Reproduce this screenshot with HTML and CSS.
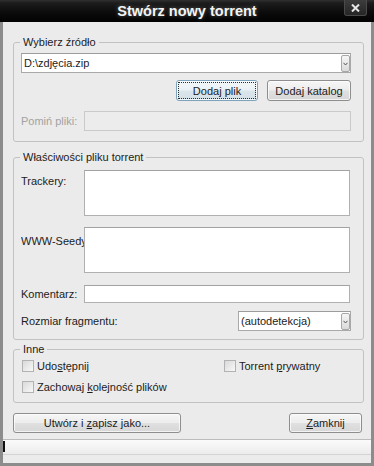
FILE: index.html
```html
<!DOCTYPE html>
<html lang="pl">
<head>
<meta charset="utf-8">
<title>Stwórz nowy torrent</title>
<link rel="stylesheet" href="styles.css">
</head>
<body>
<div class="window">
  <div class="titlebar">
    <div class="title">Stwórz nowy torrent</div>
    <div class="close-btn">
      <svg width="9" height="8" viewBox="0 0 9 8"><path d="M1 0.5 L8 7.5 M8 0.5 L1 7.5" stroke="#e6e6e6" stroke-width="2" fill="none"/></svg>
    </div>
  </div>
  <div class="frame">
    <div class="content">
      <fieldset class="group group-source">
        <legend>Wybierz źródło</legend>
        <div class="combo combo-path">
          <div class="combo-value">D:\zdjęcia.zip</div>
          <div class="combo-arrow"><svg width="5" height="4" viewBox="0 0 5 4"><path d="M0.5 0.8 L2.5 3 L4.5 0.8" stroke="#555" stroke-width="1" fill="none"/></svg></div>
        </div>
        <div class="btn-row">
          <button class="btn btn-tall btn-focus btn-add-file"><span class="focus-ring">Dodaj plik</span></button>
          <button class="btn btn-tall btn-add-dir">Dodaj katalog</button>
        </div>
        <div class="field-row field-skip">
          <span class="field-label label-disabled">Pomiń pliki:</span>
          <div class="input input-disabled"></div>
        </div>
      </fieldset>

      <fieldset class="group group-props">
        <legend>Właściwości pliku torrent</legend>
        <div class="field-row row-trackers">
          <span class="field-label">Trackery:</span>
          <div class="input textarea"></div>
        </div>
        <div class="field-row row-seeds">
          <span class="field-label">WWW-Seedy:</span>
          <div class="input textarea"></div>
        </div>
        <div class="field-row row-comment">
          <span class="field-label">Komentarz:</span>
          <div class="input input-short"></div>
        </div>
        <div class="field-row row-piece">
          <span class="field-label field-label-wide">Rozmiar fragmentu:</span>
          <div class="combo combo-piece">
            <div class="combo-value">(autodetekcja)</div>
            <div class="combo-arrow"><svg width="5" height="4" viewBox="0 0 5 4"><path d="M0.5 0.8 L2.5 3 L4.5 0.8" stroke="#555" stroke-width="1" fill="none"/></svg></div>
          </div>
        </div>
      </fieldset>

      <fieldset class="group group-other">
        <legend>Inne</legend>
        <div class="checks">
          <label class="check"><span class="box"></span><span>Udo<u>s</u>tępnij</span></label>
          <label class="check"><span class="box"></span><span>Torrent <u>p</u>rywatny</span></label>
          <label class="check"><span class="box"></span><span>Zachowaj <u>k</u>olejność plików</span></label>
        </div>
      </fieldset>

      <div class="actions">
        <button class="btn btn-create">Utwórz i&nbsp;<u>z</u>apisz jako...</button>
        <button class="btn btn-close"><u>Z</u>amknij</button>
      </div>
    </div>
    <div class="statusbar"><span class="caret"></span></div>
  </div>
</div>
</body>
</html>
```

FILE: styles.css
```css
* { box-sizing: border-box; }

html, body {
  margin: 0;
  padding: 0;
}

body {
  width: 374px;
  height: 466px;
  overflow: hidden;
  font-family: "Liberation Sans", Arial, sans-serif;
  font-size: 11px;
  color: #1c1c1c;
  background: #ebebeb;
}

.window {
  width: 374px;
  height: 466px;
  display: flex;
  flex-direction: column;
}

/* Title bar */
.titlebar {
  height: 22px;
  flex: none;
  display: flex;
  align-items: flex-start;
  background: linear-gradient(#303030 0px, #1c1c1c 3px, #0c0c0c 12px, #020202 22px);
}

.title {
  flex: 1;
  padding-left: 30px;
  text-align: center;
  line-height: 23px;
  font-weight: bold;
  font-size: 14.5px;
  color: #f4f4f4;
  text-shadow: 0 0 4px rgba(255, 255, 255, 0.35);
}

.close-btn {
  width: 23px;
  height: 16px;
  margin-right: 7px;
  border: 1px solid #4a4a4a;
  border-top: none;
  border-radius: 0 0 3px 3px;
  background: linear-gradient(#3c3c3c, #262626);
  display: flex;
  align-items: center;
  justify-content: center;
}

/* Frame */
.frame {
  flex: 1;
  display: flex;
  flex-direction: column;
  border: 3px solid #8c8c8c;
  border-top: none;
  background: #ebebeb;
}

.content {
  padding: 13px 7px 0 10px;
}

/* Group boxes */
.group {
  margin: 0;
  border: 1px solid #c2c2c2;
  border-radius: 3px;
  min-width: 0;
}

.group legend {
  padding: 0 3px;
  line-height: 14px;
  color: #1c1c1c;
}

.group-source {
  padding: 4px 12px 10px 7px;
}
.group-source legend { margin-left: -1px; }

.group-props {
  margin-top: 8px;
  padding: 6px 12px 8px 7px;
}
.group-props legend { margin-left: -1px; }

.group-other {
  margin-top: 2px;
  padding: 4px 12px 9px 8px;
}
.group-other legend { margin-left: -2px; }

/* Combo boxes */
.combo {
  display: flex;
  height: 20px;
  background: #fff;
  border: 1px solid #a9a9a9;
  border-top-color: #9c9c9c;
}

.combo-value {
  flex: 1;
  padding-left: 2px;
  line-height: 18px;
  white-space: nowrap;
  overflow: hidden;
}

.combo-arrow {
  width: 9px;
  margin: 1px 0 0 0;
  border: 1px solid #a8a8a8;
  border-radius: 2px;
  background: linear-gradient(#f6f6f6, #dadada);
  display: flex;
  align-items: center;
  justify-content: center;
}

.combo-piece {
  width: 113px;
  margin-left: auto;
}

/* Buttons */
.btn-row {
  display: flex;
  justify-content: flex-end;
  gap: 9px;
  margin-top: 7px;
}

.btn {
  font: inherit;
  color: #1c1c1c;
  height: 20px;
  padding: 0;
  border: 1px solid #8e8e8e;
  border-radius: 3px;
  background: linear-gradient(#f6f6f6 0%, #ededed 48%, #e0e0e0 52%, #d7d7d7 100%);
  box-shadow: inset 0 0 0 1px rgba(255, 255, 255, 0.7);
  display: flex;
  align-items: center;
  justify-content: center;
  white-space: nowrap;
}

.btn-tall { height: 21px; }

.btn-add-file { width: 82px; }
.btn-add-dir { width: 84px; }

.btn-focus {
  padding: 1px;
  border-color: #7ea3bd;
  background: linear-gradient(#f3f8fa 0%, #eaf1f4 48%, #dbe6eb 52%, #d2e0e6 100%);
}

.focus-ring {
  flex: 1;
  align-self: stretch;
  display: flex;
  align-items: center;
  justify-content: center;
  border: 1px dotted #2c2c2c;
}

/* Field rows */
.field-row {
  display: flex;
  align-items: flex-start;
}

.field-label {
  flex: none;
  width: 63px;
  line-height: 14px;
  white-space: nowrap;
  overflow: hidden;
}

.field-label-wide {
  width: auto;
}

.label-disabled {
  color: #a2a2a2;
}

.input {
  flex: 1;
  height: 20px;
  margin-right: 1px;
  background: #fff;
  border: 1px solid #b0b0b0;
  border-top-color: #a2a2a2;
}

.input-disabled {
  margin-right: 0;
  background: #ececec;
  border-color: #cacaca;
}

.textarea {
  height: 46px;
}

.input-short {
  height: 18px;
}

.field-skip {
  margin-top: 10px;
  align-items: center;
}

.row-trackers .field-label { padding-top: 4px; }

.row-seeds { margin-top: 11px; }
.row-seeds .field-label { padding-top: 7px; }

.row-comment {
  margin-top: 12px;
  align-items: center;
}

.row-piece {
  margin-top: 8px;
  align-items: center;
}

/* Checkboxes */
.checks {
  display: grid;
  grid-template-columns: 202px 1fr;
  row-gap: 9px;
}

.check {
  display: flex;
  align-items: center;
  gap: 3px;
  height: 12px;
  line-height: 12px;
  white-space: nowrap;
}

.box {
  flex: none;
  width: 12px;
  height: 12px;
  border: 1px solid #b2b2b2;
  background: linear-gradient(135deg, #d9d9d9, #f8f8f8);
}

/* Bottom actions */
.actions {
  display: flex;
  justify-content: space-between;
  margin-top: 10px;
}

.btn-create { width: 168px; }
.btn-close { width: 73px; margin-right: 2px; }

/* Status bar */
.statusbar {
  margin-top: 6px;
  height: 16px;
  border-top: 1px solid #bcbcbc;
  border-bottom: 1px solid #d4d4d4;
  background: linear-gradient(#fbfbfb, #ececec);
  display: flex;
  align-items: flex-start;
}

.caret {
  width: 2px;
  height: 11px;
  margin-top: 1px;
  background: #111;
}
```
